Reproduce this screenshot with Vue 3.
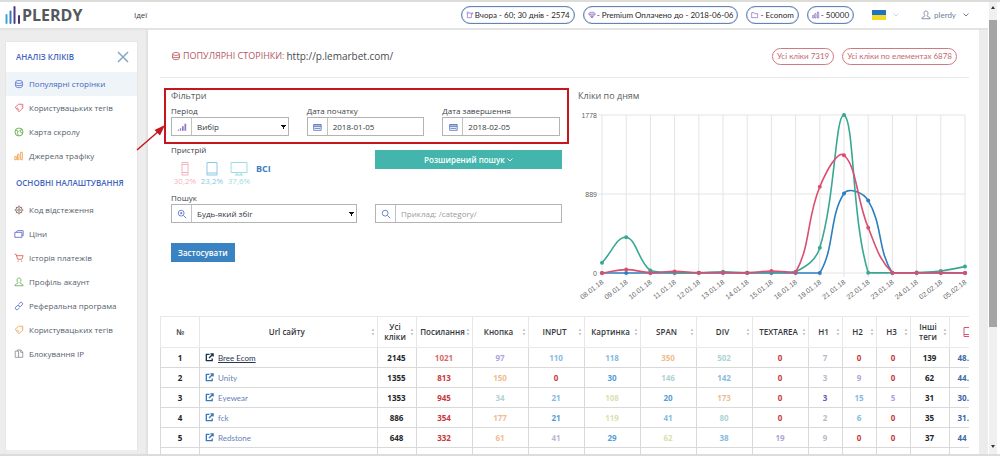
<script setup>
import { ref } from 'vue'

const icons = {
  layers: 'M2 3.500C2 1.200 10 1.200 10 3.500S2 5.800 2 3.500V8.500C2 11 10 11 10 8.500V3.500M1 6.300C2 8.600 10 8.600 11 6.300',
  tag: 'M1.5 5L5.5 1.5H10.5V6L6 10.5ZM8.5 3.2V4M3.5 5.5L6 8',
  globe: 'M6 1.2A4.8 4.8 0 1 1 6 10.8A4.8 4.8 0 1 1 6 1.2M2 3.5L5 5L4 8L6 10.5M10 3L7 4L8 6.5L10.5 7.5',
  bars: 'M1 10.5V6.5H2.8V10.5ZM4.2 10.5V4H6V10.5ZM8 10.5V1.5H10V10.5Z',
  gear: 'M6 2.2A3.8 3.8 0 1 1 6 9.8A3.8 3.8 0 1 1 6 2.2M6 4.5A1.5 1.5 0 1 1 6 7.5A1.5 1.5 0 1 1 6 4.5M6 .7V2.2M6 9.8V11.3M.7 6H2.2M9.8 6H11.3M2.2 2.2L3.3 3.3M8.7 8.7L9.8 9.8M2.2 9.8L3.3 8.7M8.7 3.3L9.8 2.2',
  wallet: 'M1 4H9.5V10H1ZM2.5 4L4 2H11V8H9.5',
  cart: 'M.8 1.5H2.5L4.3 7.5H9.3L11 3.2H3M5 9.2V10.5M9 9.2V10.5',
  user: 'M6 1.2C9 1.2 8.8 5 7.3 7C7.5 8.4 11 8 11 10.5H1C1 8 4.5 8.4 4.7 7C3.2 5 3 1.2 6 1.2Z',
  link: 'M5.5 3.8L7.5 1.8C9 .6 11.4 3 10 4.5L8 6.5C7 7.3 5.6 6.6 5.4 5.6M6.5 8.2L4.5 10.2C3 11.4 .6 9 2 7.5L4 5.5C5 4.7 6.4 5.4 6.6 6.4',
  copy: 'M1.5 2.5H5.5V10H1.5ZM4 2.5V1.2H8L10.5 3.5V10H5.5M8 1.2V4H10.5',
  diamond: 'M3 2H9L11 4.5L6 10.5L1 4.5ZM1 4.5H11M4 4.5L6 10L8 4.5',
  folder: 'M1 10V2.5H4.5L5.5 4H10V10Z',
  cup: 'M2 3H8V10H2ZM8 4.5H10V2M1 1.8H4'
}

const clickLinks = [
  { text: 'Популярні сторінки', icon: 'layers', color: '#5873d6', active: true },
  { text: 'Користувацьких тегів', icon: 'tag', color: '#e0566d' },
  { text: 'Карта скролу', icon: 'globe', color: '#5aa943' },
  { text: 'Джерела трафіку', icon: 'bars', color: '#f09a45' }
]
const settingLinks = [
  { text: 'Код відстеження', icon: 'gear', color: '#7a5a50' },
  { text: 'Ціни', icon: 'wallet', color: '#5b63cf' },
  { text: 'Історія платежів', icon: 'cart', color: '#dd5a5a' },
  { text: 'Профіль акаунт', icon: 'user', color: '#62ae55' },
  { text: 'Реферальна програма', icon: 'link', color: '#4c62cc' },
  { text: 'Користувацьких тегів', icon: 'tag', color: '#f0a052' },
  { text: 'Блокування IP', icon: 'copy', color: '#8a8d9c' }
]
const pills = [
  { text: 'Вчора - 60; 30 днів - 2574', icon: 'cup' },
  { text: '- Premium Оплачено до - 2018-06-06', icon: 'diamond' },
  { text: '- Econom', icon: 'folder' },
  { text: '- 50000', icon: 'bars' }
]
const devices = [
  { name: 'phone', share: '30,2%', color: '#f3b3c0', path: 'M5 1.5H11V14H5ZM5 3.5H11M5 11.5H11' },
  { name: 'tablet', share: '23,2%', color: '#8cc9e6', path: 'M3 1.5H13V14H3ZM3 12H13' },
  { name: 'desktop', share: '37,6%', color: '#9ddde0', path: 'M0 1.5H16V11.5H0ZM6 11.5V14M10 11.5V14M4 14H12' }
]

const period = ref('Вибір')
const dateFrom = ref('2018-01-05')
const dateTo = ref('2018-02-05')
const match = ref('Будь-який збіг')
const query = ref('')

const area = { left: 27, top: 11, bottom: 169, step: 24.2, max: 1778 }
const days = ['08.01.18', '09.01.18', '10.01.18', '11.01.18', '12.01.18', '13.01.18', '14.01.18', '15.01.18',
  '16.01.18', '19.01.18', '21.01.18', '22.01.18', '23.01.18', '24.01.18', '02.02.18', '05.02.18']
const xAt = i => area.left + i * area.step
const yAt = v => area.bottom - (v / area.max) * (area.bottom - area.top)
const series = [
  { color: '#2b7fc0', values: [0, 0, 0, 0, 0, 0, 0, 0, 0, 0, 895, 815, 0, 0, 0, 0] },
  { color: '#3aa795', values: [115, 402, 28, 4, 2, 14, 4, 10, 14, 285, 1778, 4, 2, 6, 22, 72] },
  { color: '#d94f70', values: [0, 38, 4, 18, 4, 6, 2, 22, 8, 970, 1325, 510, 4, 2, 4, 0] }
].map(s => {
  const points = s.values.map((v, i) => ({ x: xAt(i), y: yAt(v) }))
  return { ...s, points, path: spline(points) }
})

function spline(pts) {
  const cap = y => Math.min(area.bottom, Math.max(area.top, y))
  const ctl = pts.map((p, i) => {
    const a = pts[i - 1] || p
    const b = pts[i + 1] || p
    const d1 = Math.hypot(p.x - a.x, p.y - a.y)
    const d2 = Math.hypot(b.x - p.x, b.y - p.y)
    const f1 = 0.4 * d1 / (d1 + d2)
    const f2 = 0.4 * d2 / (d1 + d2)
    return {
      inX: p.x - f1 * (b.x - a.x), inY: cap(p.y - f1 * (b.y - a.y)),
      outX: p.x + f2 * (b.x - a.x), outY: cap(p.y + f2 * (b.y - a.y))
    }
  })
  return pts.map((p, i) => i === 0
    ? `M${p.x} ${p.y}`
    : `C${ctl[i - 1].outX} ${ctl[i - 1].outY} ${ctl[i].inX} ${ctl[i].inY} ${p.x} ${p.y}`).join('')
}

const columns = ['Усі кліки', 'Посилання', 'Кнопка', 'INPUT', 'Картинка', 'SPAN', 'DIV', 'TEXTAREA', 'H1', 'H2', 'H3', 'Інші теги']
const rows = [
  { site: 'Bree Ecom', cells: ['2145 k', '1021 s', '97 p', '110 b', '118 b', '350 o', '502 g', '0 r', '7 l', '0 r', '0 r', '139 k'], share: '48.' },
  { site: 'Unity', cells: ['1355 k', '813 r', '150 o', '0 r', '30 c', '146 g', '142 b', '0 r', '3 l', '9 p', '0 r', '62 k'], share: '44.' },
  { site: 'Eyewear', cells: ['1353 k', '945 r', '34 g', '21 b', '108 y', '20 c', '173 o', '0 r', '3 v', '15 b', '5 p', '31 k'], share: '30.' },
  { site: 'fck', cells: ['886 k', '354 r', '177 o', '21 c', '119 y', '41 b', '80 g', '0 r', '2 l', '6 b', '0 r', '35 k'], share: '31.' },
  { site: 'Redstone', cells: ['648 k', '332 r', '61 o', '41 l', '29 c', '62 y', '38 b', '19 p', '9 l', '0 r', '0 r', '37 k'], share: '44' }
].map(r => ({ ...r, cells: r.cells.map(c => { const [value, tone] = c.split(' '); return { value, tone } }) }))
</script>

<template>
  <div class="window">
    <div class="page">
      <header class="topbar">
        <a class="brand" href="#" aria-label="PLERDY">
          <svg class="brand-mark" viewBox="0 0 16 18" aria-hidden="true">
            <path d="M1.5 9V17" stroke="#35a9d6" /><path d="M5.5 5.5V17" stroke="#3a78bd" />
            <path d="M9.5 1V17" stroke="#4b3a86" /><path d="M14 10V17" stroke="#4a3277" />
          </svg>
          <span>PLERDY</span>
        </a>
        <a class="ideas" href="#">Ідеї</a>
        <div class="pills">
          <a v-for="p in pills" :key="p.text" class="pill" href="#">
            <svg class="icon" viewBox="0 0 12 12" aria-hidden="true"><path :d="icons[p.icon]" /></svg>{{ p.text }}
          </a>
        </div>
        <button class="flag" aria-label="Мова">
          <svg class="flag-img" viewBox="0 0 14 10" aria-hidden="true"><path fill="#1f72c0" d="M0 0H14V5H0Z" /><path fill="#f5d928" d="M0 5H14V10H0Z" /></svg>
          <svg class="caret pale" viewBox="0 0 6 4" aria-hidden="true"><path d="M.5 .5L3 3L5.500 .5" /></svg>
        </button>
        <button class="account">
          <svg class="icon" viewBox="0 0 12 12" aria-hidden="true"><path :d="icons.user" /></svg>plerdy
          <svg class="caret" viewBox="0 0 6 4" aria-hidden="true"><path d="M.5 .5L3 3L5.500 .5" /></svg>
        </button>
      </header>

      <div class="body">
        <aside class="rail">
          <nav class="menu">
            <div class="menu-head">
              <h2>АНАЛІЗ КЛІКІВ</h2>
              <button class="close" aria-label="Закрити">
                <svg viewBox="0 0 12 12" aria-hidden="true"><path d="M1 1L11 11M11 1L1 11" /></svg>
              </button>
            </div>
            <a v-for="l in clickLinks" :key="l.text" href="#" class="item" :class="{ active: l.active }">
              <svg class="icon" viewBox="0 0 12 12" :style="{ color: l.color }" aria-hidden="true"><path :d="icons[l.icon]" /></svg>{{ l.text }}
            </a>
            <div class="menu-head"><h2>ОСНОВНІ НАЛАШТУВАННЯ</h2></div>
            <a v-for="l in settingLinks" :key="l.text" href="#" class="item">
              <svg class="icon" viewBox="0 0 12 12" :style="{ color: l.color }" aria-hidden="true"><path :d="icons[l.icon]" /></svg>{{ l.text }}
            </a>
          </nav>
        </aside>

        <main class="content">
          <div class="title-row">
            <h1>
              <svg class="icon" viewBox="0 0 12 12" aria-hidden="true"><path :d="icons.layers" /></svg>ПОПУЛЯРНІ СТОРІНКИ: <span>http://p.lemarbet.com/</span>
            </h1>
            <div class="totals">
              <a href="#">Усі кліки 7319</a>
              <a href="#">Усі кліки по елементах 6878</a>
            </div>
          </div>

          <div class="panels">
            <form class="filters" @submit.prevent>
              <div class="dates">
                <h2>Фільтри</h2>
                <div class="fields">
                  <div class="field">
                    <label for="period">Період</label>
                    <div class="group">
                      <span class="addon"><svg viewBox="0 0 12 12" aria-hidden="true"><path class="fill" d="M1 9H2.500V10.500H1ZM3.500 7.500H5V10.500H3.500ZM6 5H8V10.500H6ZM9 2H11V10.500H9Z" /></svg></span>
                      <select id="period" v-model="period"><option>Вибір</option></select>
                    </div>
                  </div>
                  <div class="field">
                    <label for="from">Дата початку</label>
                    <div class="group">
                      <span class="addon"><svg viewBox="0 0 12 12" aria-hidden="true"><path d="M2 3H11V10H2ZM2 5.500H11M3 7.700H10M2 3.700H11" /></svg></span>
                      <input id="from" v-model="dateFrom" type="text" />
                    </div>
                  </div>
                  <div class="field">
                    <label for="to">Дата завершення</label>
                    <div class="group">
                      <span class="addon"><svg viewBox="0 0 12 12" aria-hidden="true"><path d="M2 3H11V10H2ZM2 5.500H11M3 7.700H10M2 3.700H11" /></svg></span>
                      <input id="to" v-model="dateTo" type="text" />
                    </div>
                  </div>
                </div>
                <svg class="pointer" viewBox="0 0 30 28" aria-hidden="true"><path d="M1 26L24 6" stroke="#c4161c" stroke-width="1.500" /><path d="M29 1L18.500 6L24 11.500Z" fill="#c4161c" /></svg>
              </div>

              <div class="rest">
                <div class="device-block">
                  <span class="label">Пристрій</span>
                  <div class="devices">
                    <button v-for="d in devices" :key="d.name" type="button" class="device" :aria-label="d.name" :style="{ color: d.color }">
                      <svg viewBox="-1 0 18 15" aria-hidden="true"><path :d="d.path" /></svg>
                      <span>{{ d.share }}</span>
                    </button>
                    <button type="button" class="all">ВСІ</button>
                  </div>
                </div>
                <button type="button" class="advanced">Розширений пошук
                  <svg class="caret" viewBox="0 0 6 4" aria-hidden="true"><path d="M.5 .5L3 3L5.500 .5" /></svg>
                </button>
                <div class="field">
                  <label for="match">Пошук</label>
                  <div class="group">
                    <span class="addon"><svg viewBox="0 0 12 12" aria-hidden="true"><path d="M5 1.500A3.500 3.500 0 1 1 5 8.500A3.500 3.500 0 1 1 5 1.500M7.800 7.800L11 11M3.500 5H6.500M5 3.500V6.500" /></svg></span>
                    <select id="match" v-model="match"><option>Будь-який збіг</option></select>
                  </div>
                </div>
                <div class="field search">
                  <div class="group">
                    <span class="addon"><svg viewBox="0 0 12 12" aria-hidden="true"><path d="M5 1.500A3.500 3.500 0 1 1 5 8.500A3.500 3.500 0 1 1 5 1.500M7.800 7.800L11 11" /></svg></span>
                    <input v-model="query" type="text" aria-label="Категорія" placeholder="Приклад: /category/" />
                  </div>
                </div>
                <button type="submit" class="apply">Застосувати</button>
              </div>
            </form>

            <section class="chart">
              <h2>Кліки по дням</h2>
              <svg viewBox="0 0 400 204" aria-label="Кліки по дням">
                <g class="grid">
                  <path v-for="v in [1778, 889, 0]" :key="v" :d="`M23 ${yAt(v)}H390`" />
                  <path v-for="(d, i) in days" :key="d" :d="`M${xAt(i)} 11V173`" />
                </g>
                <text v-for="v in [1778, 889, 0]" :key="v" x="22" :y="yAt(v) + 3" text-anchor="end">{{ v }}</text>
                <text v-for="(d, i) in days" :key="d" text-anchor="end" :transform="`translate(${xAt(i) + 2} 179) rotate(-38)`">{{ d }}</text>
                <g v-for="s in series" :key="s.color">
                  <path :d="s.path" fill="none" :stroke="s.color" stroke-width="1.600" />
                  <circle v-for="p in s.points" :key="p.x" :cx="p.x" :cy="p.y" r="2" :fill="s.color" />
                </g>
              </svg>
            </section>
          </div>

          <table>
            <colgroup>
              <col class="c-no" /><col /><col class="c-total" />
              <col v-for="n in 7" :key="n" class="c-tag" />
              <col v-for="n in 3" :key="'h' + n" class="c-head" />
              <col class="c-total" /><col class="c-last" />
            </colgroup>
            <thead>
              <tr>
                <th>№</th>
                <th v-for="c in ['Url сайту', ...columns]" :key="c">
                  <button class="sort"><span>{{ c }}</span>
                    <svg viewBox="0 0 4 8" aria-hidden="true"><path d="M2 .5L3.500 3H.5ZM2 7.500L3.500 5H.5Z" /></svg>
                  </button>
                </th>
                <th class="share">
                  <svg class="phone" viewBox="0 0 6 12" aria-label="Мобільні"><path d="M6 1.500H1V10.500H6M1 8.500H6" /></svg>
                </th>
              </tr>
            </thead>
            <tbody>
              <tr v-for="(r, i) in rows" :key="r.site">
                <td class="k">{{ i + 1 }}</td>
                <td class="site" :class="{ current: i === 0 }">
                  <a href="#"><svg viewBox="0 0 10 10" aria-hidden="true"><path d="M5 1.500H1.500V8.500H8V6M6 1H9V4M9 1L4.500 5.500" /></svg><span>{{ r.site }}</span></a>
                </td>
                <td v-for="(c, j) in r.cells" :key="j" :class="c.tone">{{ c.value }}</td>
                <td class="share">{{ r.share }}</td>
              </tr>
              <tr class="more"><td v-for="n in 15" :key="n"></td></tr>
            </tbody>
          </table>
        </main>
      </div>
    </div>
    <div class="scroll" aria-hidden="true"><i class="up"></i><i class="thumb"></i><i class="down"></i></div>
  </div>
</template>

<style>
body { background: #fff; }
</style>

<style scoped>
* { box-sizing: border-box; }
.window {
  display: flex; height: 100vh; overflow: hidden; padding-right: 3px;
  border-top: 2px solid #dcdcd8; border-bottom: 2px solid #dcdcdc; background: #fff;
  font-family: "Open Sans", "Noto Sans", sans-serif; font-size: 8px; line-height: 12px; color: #3c4248;
}
h1, h2 { margin: 0; font-weight: 400; }
a { color: inherit; text-decoration: none; }
button, input, select { font: inherit; color: inherit; margin: 0; padding: 0; border: 0; background: none; border-radius: 0; }
svg { flex: none; display: block; }
.icon, .caret { fill: none; stroke: currentColor; }
.icon { width: 10px; height: 10px; }
.caret { width: 6px; height: 4px; }
.page { flex: 1; min-width: 0; display: flex; flex-direction: column; }
.topbar { display: flex; align-items: center; height: 28px; flex: none; padding: 0 19px 0 5px; border-bottom: 2px solid #e2e4e4; }
.brand { display: flex; align-items: center; gap: 1px; width: 129px; font-size: 16px; line-height: 18px; font-weight: 700; color: #55585c; }
.brand-mark { width: 16px; height: 18px; stroke-width: 2; stroke-linecap: round; }
.pills, .account, .totals, .site { font-family: Lato, "Open Sans", sans-serif; }
.pills { display: flex; gap: 8px; margin-left: auto; }
.pill {
  display: flex; align-items: center; gap: 1px; height: 18px; padding: 0 4px; border: 1px solid #5d87b4;
  border-radius: 9px; white-space: nowrap; color: #26282c; box-shadow: inset 0 0 1px #6a4c9c;
}
.pill .icon { width: 8px; height: 8px; color: #7b62c4; }
.flag { display: flex; align-items: center; gap: 7px; margin-left: 18px; }
.flag-img { width: 14px; height: 10px; }
.pale { color: #cdd6de; }
.account { display: flex; align-items: center; gap: 3px; margin-left: 22px; color: #6d7f9b; }
.account .caret { margin-left: 4px; }
.body { flex: 1; min-height: 0; overflow: hidden; display: flex; border-right: 9px solid #ececec; }
.rail { width: 148px; flex: none; padding: 11px 10px 0 5px; background: #ededed; box-shadow: inset -2px 0 1px #e2e2e2; }
.menu { height: 100%; background: #fff; border: 1px solid #e6e6e6; border-bottom: 4px solid #ededed; }
.menu-head { display: flex; align-items: center; justify-content: space-between; height: 30px; padding: 0 8px 0 10px; }
.menu-head h2 { font-size: 8px; font-weight: 600; color: #4365bd; white-space: nowrap; }
.close svg { width: 12px; height: 12px; stroke: #84a9c6; stroke-width: 1.5; }
.item { display: flex; align-items: center; gap: 5px; height: 24px; padding-left: 8px; color: #56616c; white-space: nowrap; }
.item.active { background: #eff4f9; color: #4365bd; }
.content { flex: 1; min-width: 0; padding: 0 10px 0 12px; }
.title-row { display: flex; align-items: center; justify-content: space-between; height: 48px; padding: 5px 12px 0 11px; border-bottom: 1px solid #e9e9e9; }
.title-row h1 { display: flex; align-items: center; gap: 2px; font-size: 9px; color: #b4575f; white-space: nowrap; }
.title-row h1 span { font-size: 10px; color: #4a4a50; }
.totals { display: flex; gap: 8px; }
.totals a { height: 17px; padding: 0 4px; border: 1px solid #cf7a80; border-radius: 9px; line-height: 15px; color: #bf6a70; white-space: nowrap; }
.panels { display: grid; grid-template-columns: 405fr 400fr; gap: 6px; padding: 10px 0 0 4px; margin-right: -6px; }
.dates { position: relative; border: 2px solid #c4161c; padding: 0 7px 6px 5px; }
.dates h2, .chart h2 { font-size: 9px; line-height: 12px; color: #5a5e64; }
.fields { display: grid; grid-template-columns: 1fr 1fr 1fr; gap: 18px; margin-top: 3px; }
.pointer { position: absolute; right: 100%; top: 34px; width: 30px; height: 28px; fill: none; }
.field { display: flex; flex-direction: column; min-width: 0; }
label, .label { line-height: 12px; white-space: nowrap; }
.group { display: flex; height: 19px; border: 1px solid #b3b3b3; }
.group .addon { display: grid; place-items: center; width: 20px; flex: none; border-right: 1px solid #c2c2c2; }
.addon svg { width: 10px; height: 10px; fill: none; stroke: #5272c0; }
.addon .fill { fill: #8a74c8; stroke: none; }
.group input, .group select { flex: 1; min-width: 0; width: 100%; padding: 0 5px; color: #33373c; }
.group select {
  appearance: none; cursor: pointer;
  background: conic-gradient(from -30deg at 50% 100%, #111 60deg, transparent 0) right 2px center / 5px 4px no-repeat;
}
input::placeholder { color: #9a9a9a; opacity: 1; }
.rest { display: grid; grid-template-columns: 186fr 187fr; column-gap: 18px; padding: 0 7px; }
.device-block { height: 48px; }
.label { display: block; }
.devices { display: flex; gap: 5px; padding: 5px 0 0 3px; }
.device { display: flex; flex-direction: column; align-items: center; width: 22px; line-height: 9px; }
.device svg { width: 18px; height: 15px; fill: none; stroke: currentColor; }
.all { margin-left: 1px; align-self: flex-start; font-size: 9px; line-height: 16px; font-weight: 700; color: #3d82bf; }
.advanced { display: flex; align-items: center; justify-content: center; gap: 2px; height: 19px; margin-top: 6px; background: #43b5ac; color: #fff; font-weight: 600; }
.search { justify-content: flex-end; }
.apply { justify-self: start; height: 19px; padding: 0 7px; margin-top: 20px; background: #3a83c2; color: #fff; font-weight: 600; }
.chart h2 { padding: 2px 0 0 3px; }
.chart svg { width: 100%; margin-top: 2px; font-family: "Liberation Sans", Arial, sans-serif; font-size: 7px; }
.chart text { fill: #5f5f5f; }
.grid path { stroke: #e4e4e4; }
table { width: 100%; table-layout: fixed; border-collapse: collapse; margin-top: 8px; }
.c-no { width: 39px; }
.c-total { width: 39px; }
.c-tag { width: 56px; }
.c-head { width: 34px; }
.c-last { width: 20px; }
th, td { padding: 0; border: 1px solid #d9d9d9; text-align: center; font-weight: 700; }
th { height: 31px; border-color: #e8e8e8; font-weight: 600; line-height: 10px; color: #33373c; }
td { height: 20px; }
th:last-child, td:last-child { border-right: 0; overflow: hidden; }
.sort { display: flex; align-items: center; width: 100%; padding: 0 2px 0 3px; line-height: 10px; }
.sort span { flex: 1; }
.sort svg { width: 4px; height: 8px; fill: #c4c4c4; }
.phone { width: 6px; height: 12px; margin-left: auto; fill: none; stroke: #d9536f; }
.site { text-align: left; font-weight: 400; color: #6583b5; }
.site a { display: flex; align-items: center; gap: 4px; padding-left: 5px; }
.site svg { width: 9px; height: 9px; fill: none; stroke: #3c78b4; stroke-width: 1.5; }
.site.current { color: #2c3550; }
.site.current svg { stroke: #16304c; }
.site.current span { text-decoration: underline; }
td.share { text-align: left; padding-left: 8px; color: #3d68a5; }
.k { color: #24262a; }
.r { color: #c6393b; }
.s { color: #d96a6a; }
.p { color: #aaa6dc; }
.v { color: #6a55b8; }
.b { color: #86bbdf; }
.c { color: #559fd4; }
.o { color: #f0bc90; }
.g { color: #b0d3d3; }
.y { color: #dcdfae; }
.l { color: #bcb8cc; }
.scroll { display: flex; flex-direction: column; align-items: center; width: 8px; margin-left: 1px; background: #f0f0f0; }
.up, .down { border: 2px solid transparent; }
.up { border-bottom: 3px solid #333; margin: 2px 0 11px; }
.down { border-top: 3px solid #333; margin: auto 0 4px; }
.thumb { width: 100%; height: 68%; background: #a5a5a5; }
</style>
